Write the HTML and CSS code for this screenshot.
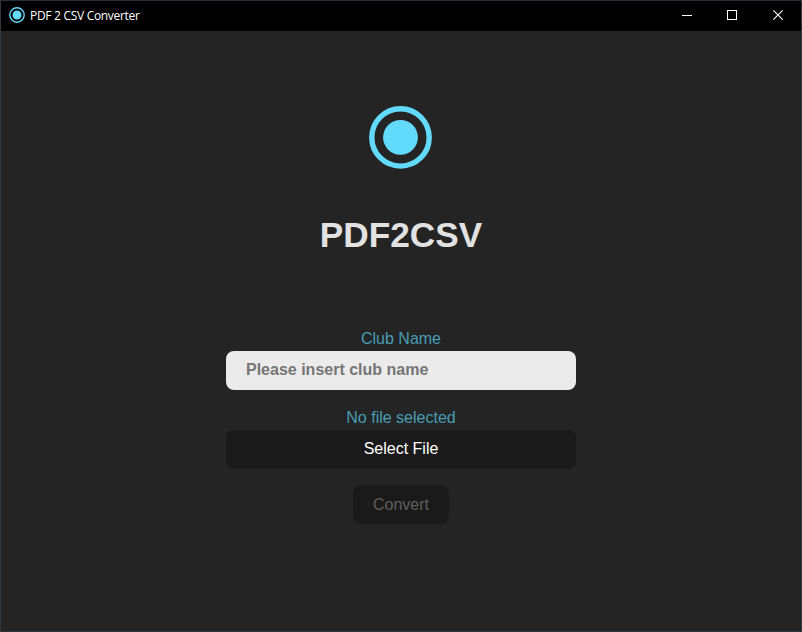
FILE: index.html
```html
<!DOCTYPE html>
<html lang="en">
<head>
<meta charset="utf-8">
<title>PDF 2 CSV Converter</title>
<link rel="stylesheet" href="styles.css">
</head>
<body>
<div class="window">
  <header class="titlebar">
    <svg class="app-icon" width="16" height="16" viewBox="0 0 16 16"><circle cx="8" cy="8" r="7.2" fill="none" stroke="#61dafb" stroke-width="1.4"/><circle cx="8" cy="8" r="4.5" fill="#61dafb"/></svg>
    <span class="app-title">PDF 2 CSV Converter</span>
    <div class="controls">
      <svg width="46" height="29" viewBox="0 0 46 29"><path d="M18 14.5h10" stroke="#fff"/></svg>
      <svg width="46" height="29" viewBox="0 0 46 29"><rect x="17.5" y="9.5" width="9" height="9" fill="none" stroke="#fff"/></svg>
      <svg width="46" height="29" viewBox="0 0 46 29"><path d="M17.3 9.3l9.4 9.4M26.7 9.3l-9.4 9.4" fill="none" stroke="#fff" stroke-width="1.1"/></svg>
    </div>
  </header>
  <main class="content">
    <svg class="logo" width="64" height="64" viewBox="0 0 64 64"><circle cx="31.5" cy="31.4" r="28.7" fill="none" stroke="#61dafb" stroke-width="5.4"/><circle cx="31.5" cy="31.4" r="17.4" fill="#61dafb"/></svg>
    <h1>PDF2CSV</h1>
    <form class="form">
      <label class="label" for="club">Club Name</label>
      <input class="field" id="club" type="text" placeholder="Please insert club name">
      <span class="label label-file">No file selected</span>
      <button class="button select" type="button">Select File</button>
      <button class="button convert" type="button" disabled>Convert</button>
    </form>
  </main>
</div>
</body>
</html>
```
FILE: styles.css
```css
* {
  box-sizing: border-box;
}

body {
  margin: 0;
  background: #242424;
  font: 16px/24px "Liberation Sans", Arial, sans-serif;
}

.window {
  display: flex;
  flex-direction: column;
  height: 632px;
  border: 1px solid #30383f;
  border-top-color: #263038;
  background: #242424;
}

.titlebar {
  display: flex;
  align-items: center;
  flex: none;
  height: 30px;
  padding-left: 8px;
  background: #000;
}

.app-icon {
  margin-bottom: 2px;
}

.app-title {
  margin-left: 5px;
  color: #fff;
  font: 12px/16px "Segoe UI", "Open Sans", sans-serif;
  letter-spacing: -0.3px;
  white-space: nowrap;
}

.controls {
  display: flex;
  align-self: flex-start;
  margin-right: -1px;
  margin-left: auto;
}

.controls svg {
  display: block;
}

.content {
  display: flex;
  flex-direction: column;
  align-items: center;
  padding-top: 75px;
}

.logo {
  display: block;
}

h1 {
  margin: 45px 0 0;
  color: #e2e2e2;
  font-size: 35.2px;
  line-height: 40px;
}

.form {
  display: flex;
  flex-direction: column;
  align-items: center;
  width: 350px;
  margin-top: 72px;
}

.label {
  color: #479eb5;
}

.label-file {
  margin-top: 16px;
}

.field,
.button {
  width: 100%;
  height: 39px;
  padding: 0 20px;
  border: 0;
  border-radius: 8px;
  font: inherit;
}

.field {
  padding-bottom: 2px;
  background: #ebebeb;
  font-weight: 700;
}

.field::placeholder {
  color: #757575;
}

.button {
  background: #1a1a1a;
  color: #fff;
}

.select {
  padding-bottom: 2px;
}

.convert {
  width: 96px;
  margin-top: 16px;
  color: #5f5f5f;
}
```
